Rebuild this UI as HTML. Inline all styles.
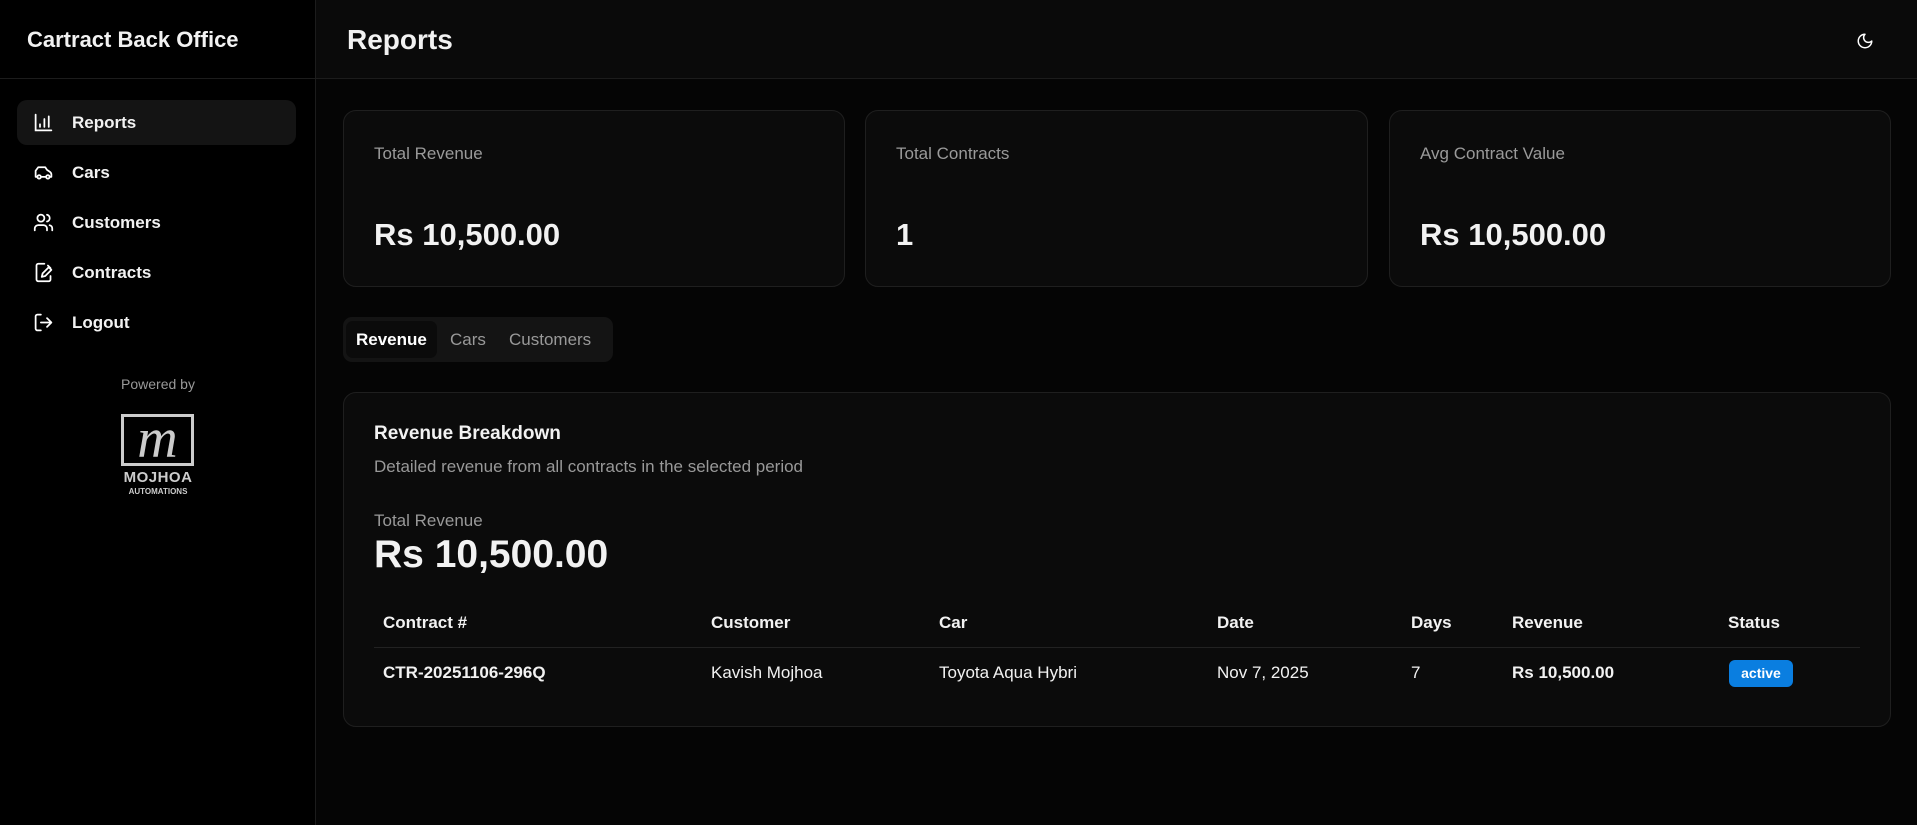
<!DOCTYPE html>
<html><head><meta charset="utf-8"><style>
*{box-sizing:border-box;margin:0;padding:0}
body{width:1917px;height:825px;background:#050505;font-family:"Liberation Sans",sans-serif;color:#f2f2f2;position:relative;overflow:hidden}
.side{position:absolute;left:0;top:0;width:316px;height:825px;background:#000;border-right:1px solid #1c1c1c}
.side .hd{height:79px;border-bottom:1px solid #1c1c1c;padding-left:27px;font-size:22px;font-weight:bold;line-height:79px}
.nav{position:absolute;left:17px;width:279px;height:45px;border-radius:10px;font-size:17px;font-weight:bold;line-height:45px;padding-left:55px}
.nav.act{background:#141414}
.nav svg{position:absolute;left:16px;top:12px}
.top{position:absolute;left:316px;top:0;right:0;height:79px;background:#0a0a0a;border-bottom:1px solid #1c1c1c}
.top h1{position:absolute;left:31px;top:24px;font-size:28px}
.card{position:absolute;background:#0b0b0b;border:1px solid #1f1f1f;border-radius:13px}
.lbl{position:absolute;left:30px;top:33px;font-size:17px;color:#9a9a9a}
.val{position:absolute;left:30px;top:106px;font-size:31px;font-weight:bold}
.tabs{position:absolute;left:343px;top:317px;width:270px;height:45px;background:#141414;border-radius:9px}
.tab{position:absolute;top:4px;height:37px;line-height:37px;font-size:17px;color:#999}
.tab.act{background:#0b0b0b;color:#fff;border-radius:7px;font-weight:bold;padding:0 10px;left:3px}
.th{position:absolute;top:613px;font-size:17px;font-weight:bold}
.td{position:absolute;top:663px;font-size:17px}
</style></head><body>
<div class="side">
<div class="hd">Cartract Back Office</div>
<div class="nav act" style="top:100px"><svg width="21" height="21" viewBox="0 0 24 24" fill="none" stroke="#fff" stroke-width="2" stroke-linecap="round"><path d="M3 3v18h18M8 17v-3M13 17V8M18 17V5"/></svg>Reports</div>
<div class="nav" style="top:150px"><svg width="21" height="21" viewBox="0 0 24 24" fill="none" stroke="#fff" stroke-width="2" stroke-linecap="round" stroke-linejoin="round"><path d="M19 17h2v-3a4 4 0 0 0-2-3l-3-2-2-3H6L3 10v7h2"/><circle cx="7" cy="17" r="2"/><circle cx="17" cy="17" r="2"/><path d="M9 17h6"/></svg>Cars</div>
<div class="nav" style="top:200px"><svg width="21" height="21" viewBox="0 0 24 24" fill="none" stroke="#fff" stroke-width="2" stroke-linecap="round"><path d="M16 21v-2a4 4 0 0 0-4-4H6a4 4 0 0 0-4 4v2"/><circle cx="9" cy="7" r="4"/><path d="M22 21v-2a4 4 0 0 0-3-3.9M16 3.1a4 4 0 0 1 0 7.8"/></svg>Customers</div>
<div class="nav" style="top:250px"><svg width="21" height="21" viewBox="0 0 24 24" fill="none" stroke="#fff" stroke-width="2" stroke-linecap="round" stroke-linejoin="round"><path d="M13 2H6a2 2 0 0 0-2 2v16a2 2 0 0 0 2 2h12a2 2 0 0 0 2-2v-4M17 4l3 3M21 9l-7 7-4 1 1-4 7-7z"/></svg>Contracts</div>
<div class="nav" style="top:300px"><svg width="21" height="21" viewBox="0 0 24 24" fill="none" stroke="#fff" stroke-width="2" stroke-linecap="round" stroke-linejoin="round"><path d="M9 21H5a2 2 0 0 1-2-2V5a2 2 0 0 1 2-2h4M16 17l5-5-5-5M21 12H9"/></svg>Logout</div>
<div style="position:absolute;top:376px;width:316px;text-align:center;font-size:14px;color:#999">Powered by</div>
<div style="position:absolute;left:121px;top:414px;width:73px;height:52px;border:3px solid #ccc;text-align:center;font-family:'Liberation Serif',serif;font-style:italic;font-size:56px;line-height:44px;color:#ccc;overflow:hidden">m</div>
<div style="position:absolute;left:110px;top:469px;width:96px;text-align:center;font-size:15px;font-weight:bold;color:#ccc;letter-spacing:0.5px">MOJHOA</div>
<div style="position:absolute;left:110px;top:487px;width:96px;text-align:center;font-size:8px;font-weight:bold;color:#ccc">AUTOMATIONS</div>
</div>
<div class="top"><h1>Reports</h1>
<svg style="position:absolute;left:1540px;top:32px" width="18" height="18" viewBox="0 0 24 24" fill="none" stroke="#fff" stroke-width="2" stroke-linecap="round" stroke-linejoin="round"><path d="M12 3a6 6 0 0 0 9 9 9 9 0 1 1-9-9z"/></svg></div>
<div class="card" style="left:343px;top:110px;width:502px;height:177px"><div class="lbl">Total Revenue</div><div class="val">Rs 10,500.00</div></div>
<div class="card" style="left:865px;top:110px;width:503px;height:177px"><div class="lbl">Total Contracts</div><div class="val">1</div></div>
<div class="card" style="left:1389px;top:110px;width:502px;height:177px"><div class="lbl">Avg Contract Value</div><div class="val">Rs 10,500.00</div></div>
<div class="tabs"><div class="tab act">Revenue</div><div class="tab" style="left:107px">Cars</div><div class="tab" style="left:166px">Customers</div></div>
<div class="card" style="left:343px;top:392px;width:1548px;height:335px">
<div style="position:absolute;left:30px;top:30px;font-size:19px;font-weight:bold">Revenue Breakdown</div>
<div style="position:absolute;left:30px;top:64px;font-size:17px;color:#999">Detailed revenue from all contracts in the selected period</div>
<div style="position:absolute;left:30px;top:118px;font-size:17px;color:#999">Total Revenue</div>
<div style="position:absolute;left:30px;top:140px;font-size:39px;font-weight:bold">Rs 10,500.00</div>
<div style="position:absolute;left:30px;right:30px;top:254px;border-top:1px solid #222"></div>
</div>
<div class="th" style="left:383px">Contract #</div><div class="th" style="left:711px">Customer</div><div class="th" style="left:939px">Car</div><div class="th" style="left:1217px">Date</div><div class="th" style="left:1411px">Days</div><div class="th" style="left:1512px">Revenue</div><div class="th" style="left:1728px">Status</div>
<div class="td" style="left:383px;font-weight:bold">CTR-20251106-296Q</div><div class="td" style="left:711px">Kavish Mojhoa</div><div class="td" style="left:939px">Toyota Aqua Hybri</div><div class="td" style="left:1217px">Nov 7, 2025</div><div class="td" style="left:1411px">7</div><div class="td" style="left:1512px;font-weight:bold">Rs 10,500.00</div>
<div style="position:absolute;left:1729px;top:660px;width:64px;height:27px;background:#0a7ee0;border-radius:6px;text-align:center;line-height:27px;font-size:14px;font-weight:bold;color:#fff">active</div>
</body></html>
